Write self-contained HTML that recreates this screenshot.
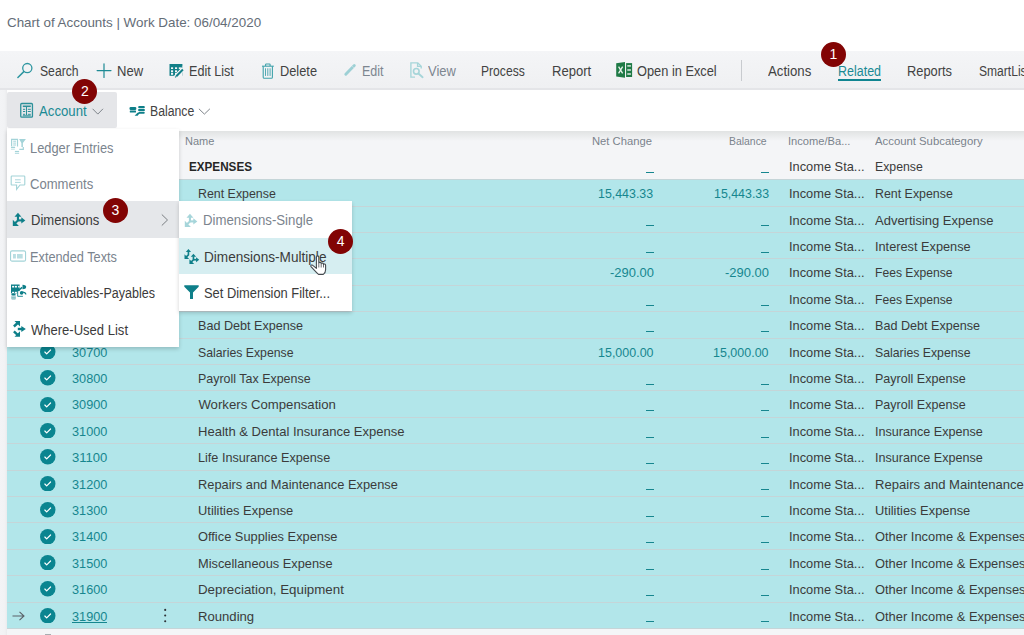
<!DOCTYPE html>
<html><head><meta charset="utf-8"><style>
html,body{margin:0;padding:0;width:1024px;height:635px;overflow:hidden;background:#fff;}
body{position:relative;font-family:"Liberation Sans",sans-serif;}
.t{position:absolute;white-space:nowrap;line-height:1;transform-origin:0 0;}
.r{position:absolute;}
.badge{position:absolute;width:25px;height:25px;border-radius:50%;background:#820404;color:#fff;font-size:14px;line-height:25px;text-align:center;font-weight:normal;}
</style></head><body>
<div class="r" style="left:0px;top:0px;width:1024px;height:51px;background:#ffffff;"></div>
<div class="r" style="left:0px;top:51px;width:1024px;height:584px;background:#f4f5f7;"></div>
<div class="r" style="left:0px;top:51px;width:1024px;height:37px;background:linear-gradient(#f4f5f7,#eff0f2);"></div>
<div class="r" style="left:0px;top:88px;width:1024px;height:2px;background:#e4e5e8;"></div>
<div class="r" style="left:0px;top:90px;width:7px;height:545px;background:linear-gradient(90deg,#f3f4f6,#f1f2f4 70%,#eaebed);"></div>
<div class="r" style="left:7px;top:90px;width:1017px;height:41px;background:#ffffff;"></div>
<div class="t" style="left:7.00px;top:16.26px;font-size:13.4px;color:#646d77;">Chart of Accounts | Work Date: 06/04/2020</div>
<div class="t" style="left:40.30px;top:63.95px;font-size:14px;color:#424242;transform:scaleX(0.8698);">Search</div>
<div class="t" style="left:116.90px;top:63.95px;font-size:14px;color:#424242;transform:scaleX(0.9298);">New</div>
<div class="t" style="left:188.90px;top:63.95px;font-size:14px;color:#424242;transform:scaleX(0.9001);">Edit List</div>
<div class="t" style="left:280.00px;top:63.95px;font-size:14px;color:#424242;transform:scaleX(0.9145);">Delete</div>
<div class="t" style="left:362.30px;top:63.95px;font-size:14px;color:#7d8690;transform:scaleX(0.8944);">Edit</div>
<div class="t" style="left:427.60px;top:63.95px;font-size:14px;color:#7d8690;transform:scaleX(0.9269);">View</div>
<div class="t" style="left:481.25px;top:63.95px;font-size:14px;color:#424242;transform:scaleX(0.8657);">Process</div>
<div class="t" style="left:551.60px;top:63.95px;font-size:14px;color:#424242;transform:scaleX(0.9333);">Report</div>
<div class="t" style="left:636.60px;top:63.95px;font-size:14px;color:#424242;transform:scaleX(0.9145);">Open in Excel</div>
<div class="r" style="left:741px;top:59.5px;width:1px;height:21.5px;background:#c8cbcf;"></div>
<div class="t" style="left:767.50px;top:63.95px;font-size:14px;color:#424242;transform:scaleX(0.9429);">Actions</div>
<div class="t" style="left:837.70px;top:63.95px;font-size:14px;color:#1a8a94;transform:scaleX(0.8916);">Related</div>
<div class="r" style="left:837.5px;top:79px;width:43.5px;height:2px;background:#0f8591;"></div>
<div class="t" style="left:907.40px;top:63.95px;font-size:14px;color:#424242;transform:scaleX(0.9184);">Reports</div>
<div class="t" style="left:978.80px;top:63.95px;font-size:14px;color:#424242;transform:scaleX(0.8617);">SmartLists</div>
<div class="r" style="left:7px;top:92px;width:110px;height:36px;background:#e5e6e9;border-radius:2px"></div>
<div class="t" style="left:39.30px;top:103.95px;font-size:14px;color:#1a8a94;transform:scaleX(0.9425);">Account</div>
<div class="t" style="left:149.70px;top:103.95px;font-size:14px;color:#424242;transform:scaleX(0.8753);">Balance</div>
<svg class="r" style="left:0;top:0" width="1024" height="140" viewBox="0 0 1024 140">
<g fill="none" stroke-linecap="round">
<circle cx="27.3" cy="68.1" r="4.6" stroke="#2e96a0" stroke-width="1.3"/>
<path d="M23.8 71.6L17.9 77.5" stroke="#2e96a0" stroke-width="1.5"/>
<path d="M104 63.8V77.5M97.1 70.6H111" stroke="#1d8a94" stroke-width="1.2"/>
</g>
<g>
<rect x="169.5" y="64" width="12.9" height="11.8" fill="#127f88"/>
<g fill="#f4f5f7">
<rect x="171" y="67.3" width="2.1" height="1.7"/><rect x="175" y="67.3" width="2.1" height="1.7"/><rect x="178.8" y="67.3" width="2.1" height="1.7"/>
<rect x="171" y="70.3" width="2.1" height="1.9"/><rect x="175" y="70.3" width="2.1" height="1.9"/>
<rect x="171" y="72.9" width="2.1" height="1.9"/><rect x="175" y="72.9" width="2.1" height="1.9"/>
<path d="M182.4 66.1V76H174L176 73.5L181 68.3Z"/>
</g>
<path d="M176 76.6L183.4 69" stroke="#f4f5f7" stroke-width="3.6"/>
<path d="M176.3 76.3L182.9 69.5" stroke="#127f88" stroke-width="2"/>
<path d="M175.2 77.4L176.3 76.3" stroke="#127f88" stroke-width="1.2"/>
</g>
<g fill="none" stroke="#3fa2ab" stroke-width="1.1">
<path d="M262 66.2H273.8"/>
<path d="M265.6 66V64.6Q265.6 64 266.3 64H269.5Q270.1 64 270.1 64.6V66"/>
<path d="M263.2 66.3V77.2Q263.2 78.3 264.3 78.3H271.4Q272.4 78.3 272.4 77.2V66.3"/>
<path d="M265.5 68.3V75.9M267.8 68.3V75.9M270.1 68.3V75.9" stroke-width="0.9"/>
</g>
<path d="M345.8 74.2L354.3 65.6" stroke="#9dd0d5" stroke-width="2.9" stroke-linecap="round"/>
<path d="M352.6 66.6L353.4 67.4" stroke="#f4f5f7" stroke-width="0.9"/>
<g fill="none" stroke="#a6d5d9" stroke-width="1.35">
<path d="M415 77.1H410.9V62.8H417.8L421.2 66.2V68.5"/>
<path d="M417.6 62.9V66.4H421"/>
<circle cx="416.3" cy="71.3" r="2.8" stroke-width="1.6"/>
<path d="M418.4 73.5L422.6 77.2" stroke-width="1.9" stroke-linecap="round"/>
</g>
<g>
<path d="M616.2 63.3L625 62V77.8L616.2 76.6Z" fill="#1f7a46"/>
<path d="M618.6 66.6L622.6 73.4M622.6 66.6L618.6 73.4" stroke="#e9f2ec" stroke-width="1.3"/>
<rect x="626.1" y="63.1" width="6" height="13.9" fill="#1f7a46"/>
<rect x="627.3" y="65.2" width="3.6" height="1.4" fill="#e9f2ec"/>
<rect x="627.3" y="69.3" width="3.6" height="1.4" fill="#e9f2ec"/>
<rect x="627.3" y="73.3" width="3.6" height="1.4" fill="#e9f2ec"/>
</g>
<g fill="none" stroke="#2c9099">
<rect x="20.75" y="103.5" width="11.7" height="13.7" rx="1" stroke-width="1.3"/>
<path d="M22.8 106.3H30.8" stroke-width="1.6"/>
<path d="M26.5 107V115M23 109.3H25.2M27.8 109.3H30.8M23 111.5H25.2M27.8 111.5H30.8M23 114.3H25.2M27.8 114.3H30.8M22.8 115.8H30.8" stroke-width="1"/>
</g>
<g fill="#0e7f89">
<rect x="129.5" y="106.9" width="6.8" height="3" rx="1.2"/><rect x="129.8" y="110.6" width="6.2" height="2" rx="0.5"/>
<rect x="138.2" y="105.9" width="6.6" height="2.4" rx="1"/><rect x="138.2" y="109" width="6.6" height="2" rx="0.6"/><rect x="138.6" y="111.7" width="5.9" height="2" rx="0.5"/>
<path d="M134.6 115.8L137.5 112.8H140L137.6 115.8Z"/>
</g>
<g fill="none" stroke="#7f858b" stroke-width="1">
<path d="M92.6 108.8L97.8 114.1L103 108.8"/>
<path d="M198.9 108.8L204.4 114.1L209.9 108.8"/>
</g>
</svg>
<div class="r" style="left:7px;top:131px;width:1017px;height:48.25px;background:#f4f5f7;"></div>
<div class="r" style="left:7px;top:131px;width:1017px;height:10px;background:linear-gradient(#e1e3e3,rgba(243,244,246,0))"></div>
<div class="t" style="left:185.00px;top:135.63px;font-size:10.6px;color:#7a838c;transform:scaleX(1.0388);">Name</div>
<div class="t" style="left:591.70px;top:135.63px;font-size:10.6px;color:#7a838c;transform:scaleX(1.0610);">Net Change</div>
<div class="t" style="left:728.80px;top:135.63px;font-size:10.6px;color:#7a838c;transform:scaleX(0.9838);">Balance</div>
<div class="t" style="left:788.30px;top:135.63px;font-size:10.6px;color:#7a838c;transform:scaleX(1.0501);">Income/Ba...</div>
<div class="t" style="left:874.80px;top:135.63px;font-size:10.6px;color:#7a838c;transform:scaleX(1.0690);">Account Subcategory</div>
<div class="t" style="left:189.00px;top:160.43px;font-size:13.2px;color:#262626;transform:scaleX(0.8855);font-weight:bold;">EXPENSES</div>
<div class="r" style="left:645.6px;top:172px;width:8px;height:1px;background:#16868f;"></div>
<div class="r" style="left:760.8px;top:172px;width:8px;height:1px;background:#16868f;"></div>
<div class="t" style="left:789.00px;top:160.43px;font-size:13.2px;color:#3b3b3b;transform:scaleX(0.9724);">Income Sta...</div>
<div class="t" style="left:875.30px;top:160.43px;font-size:13.2px;color:#3b3b3b;transform:scaleX(0.9309);">Expense</div>
<div class="r" style="left:7px;top:179.25px;width:1017px;height:26.6px;background:#b2e6ea;"></div>
<div class="t" style="left:198.40px;top:187.18px;font-size:13.2px;color:#3b3b3b;transform:scaleX(0.9397);">Rent Expense</div>
<div class="t" style="left:598.40px;top:187.18px;font-size:13.2px;color:#16868f;transform:scaleX(0.9397);">15,443.33</div>
<div class="t" style="left:713.60px;top:187.18px;font-size:13.2px;color:#16868f;transform:scaleX(0.9397);">15,443.33</div>
<div class="t" style="left:789.00px;top:187.18px;font-size:13.2px;color:#3b3b3b;transform:scaleX(0.9724);">Income Sta...</div>
<div class="t" style="left:875.30px;top:187.18px;font-size:13.2px;color:#3b3b3b;transform:scaleX(0.9397);">Rent Expense</div>
<div class="r" style="left:7px;top:205.65px;width:1017px;height:26.6px;background:#b2e6ea;"></div>
<div class="t" style="left:198.40px;top:213.58px;font-size:13.2px;color:#3b3b3b;transform:scaleX(0.9849);">Advertising Expense</div>
<div class="r" style="left:645.6px;top:225px;width:8px;height:1px;background:#16868f;"></div>
<div class="r" style="left:760.8px;top:225px;width:8px;height:1px;background:#16868f;"></div>
<div class="t" style="left:789.00px;top:213.58px;font-size:13.2px;color:#3b3b3b;transform:scaleX(0.9724);">Income Sta...</div>
<div class="t" style="left:875.30px;top:213.58px;font-size:13.2px;color:#3b3b3b;transform:scaleX(0.9849);">Advertising Expense</div>
<div class="r" style="left:7px;top:232.05px;width:1017px;height:26.6px;background:#b2e6ea;"></div>
<div class="t" style="left:198.40px;top:239.98px;font-size:13.2px;color:#3b3b3b;transform:scaleX(0.9660);">Interest Expense</div>
<div class="r" style="left:645.6px;top:252px;width:8px;height:1px;background:#16868f;"></div>
<div class="r" style="left:760.8px;top:252px;width:8px;height:1px;background:#16868f;"></div>
<div class="t" style="left:789.00px;top:239.98px;font-size:13.2px;color:#3b3b3b;transform:scaleX(0.9724);">Income Sta...</div>
<div class="t" style="left:875.30px;top:239.98px;font-size:13.2px;color:#3b3b3b;transform:scaleX(0.9660);">Interest Expense</div>
<div class="r" style="left:7px;top:258.45px;width:1017px;height:26.6px;background:#b2e6ea;"></div>
<div class="t" style="left:198.40px;top:266.38px;font-size:13.2px;color:#3b3b3b;transform:scaleX(0.9900);">Bank Fees Expense</div>
<div class="t" style="left:609.70px;top:266.38px;font-size:13.2px;color:#16868f;transform:scaleX(0.9810);">-290.00</div>
<div class="t" style="left:724.90px;top:266.38px;font-size:13.2px;color:#16868f;transform:scaleX(0.9810);">-290.00</div>
<div class="t" style="left:789.00px;top:266.38px;font-size:13.2px;color:#3b3b3b;transform:scaleX(0.9724);">Income Sta...</div>
<div class="t" style="left:875.30px;top:266.38px;font-size:13.2px;color:#3b3b3b;transform:scaleX(0.9193);">Fees Expense</div>
<div class="r" style="left:7px;top:284.85px;width:1017px;height:26.6px;background:#b2e6ea;"></div>
<div class="t" style="left:198.40px;top:292.78px;font-size:13.2px;color:#3b3b3b;transform:scaleX(0.9900);">Collection Fees Expense</div>
<div class="r" style="left:645.6px;top:305px;width:8px;height:1px;background:#16868f;"></div>
<div class="r" style="left:760.8px;top:305px;width:8px;height:1px;background:#16868f;"></div>
<div class="t" style="left:789.00px;top:292.78px;font-size:13.2px;color:#3b3b3b;transform:scaleX(0.9724);">Income Sta...</div>
<div class="t" style="left:875.30px;top:292.78px;font-size:13.2px;color:#3b3b3b;transform:scaleX(0.9193);">Fees Expense</div>
<div class="r" style="left:7px;top:311.25px;width:1017px;height:26.6px;background:#b2e6ea;"></div>
<div class="t" style="left:198.40px;top:319.18px;font-size:13.2px;color:#3b3b3b;transform:scaleX(0.9547);">Bad Debt Expense</div>
<div class="r" style="left:645.6px;top:331px;width:8px;height:1px;background:#16868f;"></div>
<div class="r" style="left:760.8px;top:331px;width:8px;height:1px;background:#16868f;"></div>
<div class="t" style="left:789.00px;top:319.18px;font-size:13.2px;color:#3b3b3b;transform:scaleX(0.9724);">Income Sta...</div>
<div class="t" style="left:875.30px;top:319.18px;font-size:13.2px;color:#3b3b3b;transform:scaleX(0.9547);">Bad Debt Expense</div>
<div class="r" style="left:7px;top:337.65px;width:1017px;height:26.6px;background:#b2e6ea;"></div>
<div class="t" style="left:198.40px;top:345.58px;font-size:13.2px;color:#3b3b3b;transform:scaleX(0.9313);">Salaries Expense</div>
<div class="t" style="left:71.80px;top:345.58px;font-size:13.2px;color:#16868f;transform:scaleX(0.9647);">30700</div>
<svg class="r" style="left:40px;top:343.70px" width="15.5" height="15.5" viewBox="0 0 16 16"><circle cx="8" cy="8" r="8" fill="#0a8590"/><path d="M5 8.3l1.9 1.9 4-4" stroke="#fff" stroke-width="1.25" fill="none" stroke-linecap="round" stroke-linejoin="round"/></svg>
<div class="t" style="left:598.00px;top:345.58px;font-size:13.2px;color:#16868f;transform:scaleX(0.9465);">15,000.00</div>
<div class="t" style="left:713.20px;top:345.58px;font-size:13.2px;color:#16868f;transform:scaleX(0.9465);">15,000.00</div>
<div class="t" style="left:789.00px;top:345.58px;font-size:13.2px;color:#3b3b3b;transform:scaleX(0.9724);">Income Sta...</div>
<div class="t" style="left:875.30px;top:345.58px;font-size:13.2px;color:#3b3b3b;transform:scaleX(0.9313);">Salaries Expense</div>
<div class="r" style="left:7px;top:364.05px;width:1017px;height:26.6px;background:#b2e6ea;"></div>
<div class="t" style="left:198.40px;top:371.98px;font-size:13.2px;color:#3b3b3b;transform:scaleX(0.9445);">Payroll Tax Expense</div>
<div class="t" style="left:71.80px;top:371.98px;font-size:13.2px;color:#16868f;transform:scaleX(0.9647);">30800</div>
<svg class="r" style="left:40px;top:370.10px" width="15.5" height="15.5" viewBox="0 0 16 16"><circle cx="8" cy="8" r="8" fill="#0a8590"/><path d="M5 8.3l1.9 1.9 4-4" stroke="#fff" stroke-width="1.25" fill="none" stroke-linecap="round" stroke-linejoin="round"/></svg>
<div class="r" style="left:645.6px;top:384px;width:8px;height:1px;background:#16868f;"></div>
<div class="r" style="left:760.8px;top:384px;width:8px;height:1px;background:#16868f;"></div>
<div class="t" style="left:789.00px;top:371.98px;font-size:13.2px;color:#3b3b3b;transform:scaleX(0.9724);">Income Sta...</div>
<div class="t" style="left:875.30px;top:371.98px;font-size:13.2px;color:#3b3b3b;transform:scaleX(0.9510);">Payroll Expense</div>
<div class="r" style="left:7px;top:390.45px;width:1017px;height:26.6px;background:#b2e6ea;"></div>
<div class="t" style="left:198.40px;top:398.38px;font-size:13.2px;color:#3b3b3b;">Workers Compensation</div>
<div class="t" style="left:71.80px;top:398.38px;font-size:13.2px;color:#16868f;transform:scaleX(0.9647);">30900</div>
<svg class="r" style="left:40px;top:396.50px" width="15.5" height="15.5" viewBox="0 0 16 16"><circle cx="8" cy="8" r="8" fill="#0a8590"/><path d="M5 8.3l1.9 1.9 4-4" stroke="#fff" stroke-width="1.25" fill="none" stroke-linecap="round" stroke-linejoin="round"/></svg>
<div class="r" style="left:645.6px;top:410px;width:8px;height:1px;background:#16868f;"></div>
<div class="r" style="left:760.8px;top:410px;width:8px;height:1px;background:#16868f;"></div>
<div class="t" style="left:789.00px;top:398.38px;font-size:13.2px;color:#3b3b3b;transform:scaleX(0.9724);">Income Sta...</div>
<div class="t" style="left:875.30px;top:398.38px;font-size:13.2px;color:#3b3b3b;transform:scaleX(0.9510);">Payroll Expense</div>
<div class="r" style="left:7px;top:416.85px;width:1017px;height:26.6px;background:#b2e6ea;"></div>
<div class="t" style="left:198.40px;top:424.78px;font-size:13.2px;color:#3b3b3b;transform:scaleX(0.9883);">Health &amp; Dental Insurance Expense</div>
<div class="t" style="left:71.80px;top:424.78px;font-size:13.2px;color:#16868f;transform:scaleX(0.9647);">31000</div>
<svg class="r" style="left:40px;top:422.90px" width="15.5" height="15.5" viewBox="0 0 16 16"><circle cx="8" cy="8" r="8" fill="#0a8590"/><path d="M5 8.3l1.9 1.9 4-4" stroke="#fff" stroke-width="1.25" fill="none" stroke-linecap="round" stroke-linejoin="round"/></svg>
<div class="r" style="left:645.6px;top:437px;width:8px;height:1px;background:#16868f;"></div>
<div class="r" style="left:760.8px;top:437px;width:8px;height:1px;background:#16868f;"></div>
<div class="t" style="left:789.00px;top:424.78px;font-size:13.2px;color:#3b3b3b;transform:scaleX(0.9724);">Income Sta...</div>
<div class="t" style="left:875.30px;top:424.78px;font-size:13.2px;color:#3b3b3b;transform:scaleX(0.9549);">Insurance Expense</div>
<div class="r" style="left:7px;top:443.25px;width:1017px;height:26.6px;background:#b2e6ea;"></div>
<div class="t" style="left:198.40px;top:451.18px;font-size:13.2px;color:#3b3b3b;transform:scaleX(0.9591);">Life Insurance Expense</div>
<div class="t" style="left:71.80px;top:451.18px;font-size:13.2px;color:#16868f;transform:scaleX(0.9914);">31100</div>
<svg class="r" style="left:40px;top:449.30px" width="15.5" height="15.5" viewBox="0 0 16 16"><circle cx="8" cy="8" r="8" fill="#0a8590"/><path d="M5 8.3l1.9 1.9 4-4" stroke="#fff" stroke-width="1.25" fill="none" stroke-linecap="round" stroke-linejoin="round"/></svg>
<div class="r" style="left:645.6px;top:463px;width:8px;height:1px;background:#16868f;"></div>
<div class="r" style="left:760.8px;top:463px;width:8px;height:1px;background:#16868f;"></div>
<div class="t" style="left:789.00px;top:451.18px;font-size:13.2px;color:#3b3b3b;transform:scaleX(0.9724);">Income Sta...</div>
<div class="t" style="left:875.30px;top:451.18px;font-size:13.2px;color:#3b3b3b;transform:scaleX(0.9549);">Insurance Expense</div>
<div class="r" style="left:7px;top:469.65px;width:1017px;height:26.6px;background:#b2e6ea;"></div>
<div class="t" style="left:198.40px;top:477.58px;font-size:13.2px;color:#3b3b3b;transform:scaleX(0.9739);">Repairs and Maintenance Expense</div>
<div class="t" style="left:71.80px;top:477.58px;font-size:13.2px;color:#16868f;transform:scaleX(0.9647);">31200</div>
<svg class="r" style="left:40px;top:475.70px" width="15.5" height="15.5" viewBox="0 0 16 16"><circle cx="8" cy="8" r="8" fill="#0a8590"/><path d="M5 8.3l1.9 1.9 4-4" stroke="#fff" stroke-width="1.25" fill="none" stroke-linecap="round" stroke-linejoin="round"/></svg>
<div class="r" style="left:645.6px;top:489px;width:8px;height:1px;background:#16868f;"></div>
<div class="r" style="left:760.8px;top:489px;width:8px;height:1px;background:#16868f;"></div>
<div class="t" style="left:789.00px;top:477.58px;font-size:13.2px;color:#3b3b3b;transform:scaleX(0.9724);">Income Sta...</div>
<div class="t" style="left:875.30px;top:477.58px;font-size:13.2px;color:#3b3b3b;transform:scaleX(0.9906);">Repairs and Maintenance</div>
<div class="r" style="left:7px;top:496.05px;width:1017px;height:26.6px;background:#b2e6ea;"></div>
<div class="t" style="left:198.40px;top:503.98px;font-size:13.2px;color:#3b3b3b;transform:scaleX(0.9770);">Utilities Expense</div>
<div class="t" style="left:71.80px;top:503.98px;font-size:13.2px;color:#16868f;transform:scaleX(0.9647);">31300</div>
<svg class="r" style="left:40px;top:502.10px" width="15.5" height="15.5" viewBox="0 0 16 16"><circle cx="8" cy="8" r="8" fill="#0a8590"/><path d="M5 8.3l1.9 1.9 4-4" stroke="#fff" stroke-width="1.25" fill="none" stroke-linecap="round" stroke-linejoin="round"/></svg>
<div class="r" style="left:645.6px;top:516px;width:8px;height:1px;background:#16868f;"></div>
<div class="r" style="left:760.8px;top:516px;width:8px;height:1px;background:#16868f;"></div>
<div class="t" style="left:789.00px;top:503.98px;font-size:13.2px;color:#3b3b3b;transform:scaleX(0.9724);">Income Sta...</div>
<div class="t" style="left:875.30px;top:503.98px;font-size:13.2px;color:#3b3b3b;transform:scaleX(0.9770);">Utilities Expense</div>
<div class="r" style="left:7px;top:522.45px;width:1017px;height:26.6px;background:#b2e6ea;"></div>
<div class="t" style="left:198.40px;top:530.38px;font-size:13.2px;color:#3b3b3b;transform:scaleX(0.9725);">Office Supplies Expense</div>
<div class="t" style="left:71.80px;top:530.38px;font-size:13.2px;color:#16868f;transform:scaleX(0.9647);">31400</div>
<svg class="r" style="left:40px;top:528.50px" width="15.5" height="15.5" viewBox="0 0 16 16"><circle cx="8" cy="8" r="8" fill="#0a8590"/><path d="M5 8.3l1.9 1.9 4-4" stroke="#fff" stroke-width="1.25" fill="none" stroke-linecap="round" stroke-linejoin="round"/></svg>
<div class="r" style="left:645.6px;top:542px;width:8px;height:1px;background:#16868f;"></div>
<div class="r" style="left:760.8px;top:542px;width:8px;height:1px;background:#16868f;"></div>
<div class="t" style="left:789.00px;top:530.38px;font-size:13.2px;color:#3b3b3b;transform:scaleX(0.9724);">Income Sta...</div>
<div class="t" style="left:875.30px;top:530.38px;font-size:13.2px;color:#3b3b3b;transform:scaleX(0.9779);">Other Income &amp; Expenses</div>
<div class="r" style="left:7px;top:548.85px;width:1017px;height:26.6px;background:#b2e6ea;"></div>
<div class="t" style="left:198.40px;top:556.78px;font-size:13.2px;color:#3b3b3b;transform:scaleX(0.9714);">Miscellaneous Expense</div>
<div class="t" style="left:71.80px;top:556.78px;font-size:13.2px;color:#16868f;transform:scaleX(0.9647);">31500</div>
<svg class="r" style="left:40px;top:554.90px" width="15.5" height="15.5" viewBox="0 0 16 16"><circle cx="8" cy="8" r="8" fill="#0a8590"/><path d="M5 8.3l1.9 1.9 4-4" stroke="#fff" stroke-width="1.25" fill="none" stroke-linecap="round" stroke-linejoin="round"/></svg>
<div class="r" style="left:645.6px;top:569px;width:8px;height:1px;background:#16868f;"></div>
<div class="r" style="left:760.8px;top:569px;width:8px;height:1px;background:#16868f;"></div>
<div class="t" style="left:789.00px;top:556.78px;font-size:13.2px;color:#3b3b3b;transform:scaleX(0.9724);">Income Sta...</div>
<div class="t" style="left:875.30px;top:556.78px;font-size:13.2px;color:#3b3b3b;transform:scaleX(0.9779);">Other Income &amp; Expenses</div>
<div class="r" style="left:7px;top:575.25px;width:1017px;height:26.6px;background:#b2e6ea;"></div>
<div class="t" style="left:198.40px;top:583.18px;font-size:13.2px;color:#3b3b3b;transform:scaleX(1.0101);">Depreciation, Equipment</div>
<div class="t" style="left:71.80px;top:583.18px;font-size:13.2px;color:#16868f;transform:scaleX(0.9647);">31600</div>
<svg class="r" style="left:40px;top:581.30px" width="15.5" height="15.5" viewBox="0 0 16 16"><circle cx="8" cy="8" r="8" fill="#0a8590"/><path d="M5 8.3l1.9 1.9 4-4" stroke="#fff" stroke-width="1.25" fill="none" stroke-linecap="round" stroke-linejoin="round"/></svg>
<div class="r" style="left:645.6px;top:595px;width:8px;height:1px;background:#16868f;"></div>
<div class="r" style="left:760.8px;top:595px;width:8px;height:1px;background:#16868f;"></div>
<div class="t" style="left:789.00px;top:583.18px;font-size:13.2px;color:#3b3b3b;transform:scaleX(0.9724);">Income Sta...</div>
<div class="t" style="left:875.30px;top:583.18px;font-size:13.2px;color:#3b3b3b;transform:scaleX(0.9779);">Other Income &amp; Expenses</div>
<div class="r" style="left:7px;top:601.65px;width:1017px;height:26.6px;background:#b2e6ea;"></div>
<div class="t" style="left:198.40px;top:609.58px;font-size:13.2px;color:#3b3b3b;transform:scaleX(0.9948);">Rounding</div>
<div class="t" style="left:71.80px;top:609.58px;font-size:13.2px;color:#16868f;transform:scaleX(0.9647);">31900</div>
<svg class="r" style="left:40px;top:607.70px" width="15.5" height="15.5" viewBox="0 0 16 16"><circle cx="8" cy="8" r="8" fill="#0a8590"/><path d="M5 8.3l1.9 1.9 4-4" stroke="#fff" stroke-width="1.25" fill="none" stroke-linecap="round" stroke-linejoin="round"/></svg>
<div class="r" style="left:645.6px;top:621px;width:8px;height:1px;background:#16868f;"></div>
<div class="r" style="left:760.8px;top:621px;width:8px;height:1px;background:#16868f;"></div>
<div class="t" style="left:789.00px;top:609.58px;font-size:13.2px;color:#3b3b3b;transform:scaleX(0.9724);">Income Sta...</div>
<div class="t" style="left:875.30px;top:609.58px;font-size:13.2px;color:#3b3b3b;transform:scaleX(0.9779);">Other Income &amp; Expenses</div>
<div class="r" style="left:7px;top:179px;width:1017px;height:1px;background:#c5d5d8;"></div>
<div class="r" style="left:7px;top:206px;width:1017px;height:1px;background:#c5d5d8;"></div>
<div class="r" style="left:7px;top:232px;width:1017px;height:1px;background:#c5d5d8;"></div>
<div class="r" style="left:7px;top:258px;width:1017px;height:1px;background:#c5d5d8;"></div>
<div class="r" style="left:7px;top:285px;width:1017px;height:1px;background:#c5d5d8;"></div>
<div class="r" style="left:7px;top:311px;width:1017px;height:1px;background:#c5d5d8;"></div>
<div class="r" style="left:7px;top:338px;width:1017px;height:1px;background:#c5d5d8;"></div>
<div class="r" style="left:7px;top:364px;width:1017px;height:1px;background:#c5d5d8;"></div>
<div class="r" style="left:7px;top:390px;width:1017px;height:1px;background:#c5d5d8;"></div>
<div class="r" style="left:7px;top:417px;width:1017px;height:1px;background:#c5d5d8;"></div>
<div class="r" style="left:7px;top:443px;width:1017px;height:1px;background:#c5d5d8;"></div>
<div class="r" style="left:7px;top:470px;width:1017px;height:1px;background:#c5d5d8;"></div>
<div class="r" style="left:7px;top:496px;width:1017px;height:1px;background:#c5d5d8;"></div>
<div class="r" style="left:7px;top:522px;width:1017px;height:1px;background:#c5d5d8;"></div>
<div class="r" style="left:7px;top:549px;width:1017px;height:1px;background:#c5d5d8;"></div>
<div class="r" style="left:7px;top:575px;width:1017px;height:1px;background:#c5d5d8;"></div>
<div class="r" style="left:7px;top:602px;width:1017px;height:1px;background:#c5d5d8;"></div>
<div class="r" style="left:7px;top:628px;width:1017px;height:1px;background:#c5d5d8;"></div>
<svg class="r" style="left:12px;top:610.75px" width="13" height="10" viewBox="0 0 13 10"><path d="M0.5 5H12M7.5 0.8L12 5 7.5 9.2" stroke="#5a6168" stroke-width="1.1" fill="none"/></svg>
<div class="r" style="left:71.5px;top:622px;width:35.5px;height:1px;background:#16868f;"></div>
<svg class="r" style="left:160px;top:604px" width="10" height="22" viewBox="160 604 10 22"><g fill="#2f3337"><circle cx="165.2" cy="609.9" r="1.05"/><circle cx="165.2" cy="615.5" r="1.05"/><circle cx="165.2" cy="621.3" r="1.05"/></g></svg>
<div class="r" style="left:44.5px;top:633.6px;width:6.5px;height:1.4px;background:#a9adb1;"></div>
<div class="r" style="left:7px;top:128.5px;width:171.5px;height:218.10px;background:#fff;box-shadow:0 1.5px 4px rgba(0,0,0,0.18)"></div>
<div class="r" style="left:7px;top:201.2px;width:171.5px;height:36.35px;background:#e5e7ea;"></div>
<div class="t" style="left:29.90px;top:141.92px;font-size:13.8px;color:#7b848e;transform:scaleX(0.9302);">Ledger Entries</div>
<div class="t" style="left:29.90px;top:178.02px;font-size:13.8px;color:#7b848e;transform:scaleX(0.9472);">Comments</div>
<div class="t" style="left:30.80px;top:214.02px;font-size:13.8px;color:#3b3b3b;transform:scaleX(0.9458);">Dimensions</div>
<div class="t" style="left:30.00px;top:250.62px;font-size:13.8px;color:#7b848e;transform:scaleX(0.9244);">Extended Texts</div>
<div class="t" style="left:30.90px;top:287.12px;font-size:13.8px;color:#3b3b3b;transform:scaleX(0.9081);">Receivables-Payables</div>
<div class="t" style="left:30.90px;top:323.72px;font-size:13.8px;color:#3b3b3b;transform:scaleX(0.9441);">Where-Used List</div>
<svg class="r" style="left:160px;top:213px" width="10" height="14" viewBox="0 0 10 14"><path d="M1.8 1.5L7.5 7 1.8 12.5" stroke="#74787c" stroke-width="0.95" fill="none"/></svg>
<div class="r" style="left:179.25px;top:201.25px;width:173px;height:109.50px;background:#fff;box-shadow:0 1.5px 4px rgba(0,0,0,0.18)"></div>
<div class="r" style="left:179.25px;top:237.75px;width:173px;height:36.5px;background:#d6eef1;"></div>
<div class="t" style="left:202.50px;top:214.12px;font-size:13.8px;color:#7b848e;transform:scaleX(0.9563);">Dimensions-Single</div>
<div class="t" style="left:203.75px;top:250.92px;font-size:13.8px;color:#3b3b3b;transform:scaleX(0.9858);">Dimensions-Multiple</div>
<div class="t" style="left:203.75px;top:287.12px;font-size:13.8px;color:#3b3b3b;transform:scaleX(0.9336);">Set Dimension Filter...</div>
<svg class="r" style="left:0;top:0" width="400" height="350" viewBox="0 0 400 350">
<g transform="translate(7 135)">
<g fill="none" stroke="#a3d3d8" stroke-width="1.2">
<path d="M4.6 11.2V4.4H10.5V11.5"/>
<path d="M6.2 6.2H9M6.2 8.1H9M6.2 10H9" stroke-width="1"/>
<path d="M16.3 12V14.3H12.3"/>
</g>
<path d="M12.1 3.9H18.9L15.9 8.1V12.1L14.4 12.1V8.1Z" fill="#a3d3d8"/>
<g fill="#a3d3d8">
<rect x="4" y="11.7" width="4.1" height="1.4"/>
<rect x="4" y="13.8" width="3.8" height="1" opacity="0.6"/>
<rect x="7.9" y="15.9" width="4.2" height="1.2"/>
<rect x="7.9" y="17.8" width="4.2" height="1.1" opacity="0.8"/>
</g>
</g>
<g transform="translate(7 171)" fill="none" stroke="#a3d3d8" stroke-width="1.1">
<path d="M6.2 14H4.6Q4.2 14 4.2 13.4V5.8Q4.2 5 5 5H17Q17.8 5 17.8 5.8V13.2Q17.8 14 17 14H13L9.6 18.3V14Z"/>
<path d="M8 8.8H13.7M8 11.4H13.7" stroke-width="0.9"/>
</g>
<path d="M17.95 216.00L17.95 220.40L14.60 223.80" stroke="#0e7f89" stroke-width="2.10" fill="none"/><path d="M14.50 216.70L17.95 212.70L21.40 216.70Z" fill="#0e7f89"/><path d="M12.80 219.80L12.80 225.90L18.90 225.90Z" fill="#0e7f89"/><path d="M17.95 220.40L22.00 220.40" stroke="#0e7f89" stroke-width="2.10" fill="none"/><path d="M21.30 217.30L25.30 220.40L21.30 223.50Z" fill="#0e7f89"/>
<g transform="translate(7 244)">
<rect x="3.55" y="6.85" width="15" height="10.3" rx="1.5" fill="none" stroke="#a3d3d8" stroke-width="1.1"/>
<rect x="6" y="10" width="2.9" height="4.5" fill="#a3d3d8" opacity="0.75"/>
<rect x="10" y="10" width="5.7" height="4.5" fill="#a3d3d8" opacity="0.75"/>
</g>
<g transform="translate(9 282)" fill="#0e7f89">
<rect x="2" y="2.5" width="8.6" height="6.6"/>
<rect x="2" y="9" width="6.4" height="2.3"/>
<g fill="#fff"><rect x="3.1" y="3.9" width="2.1" height="1.6"/><rect x="6" y="3.9" width="1.9" height="1.6"/><rect x="9.1" y="3.9" width="1.5" height="1.6"/><rect x="3.1" y="9.8" width="2.1" height="1.2"/><rect x="6" y="9.8" width="1.9" height="1.2"/></g>
<path d="M8.7 9V14.3H13.9" stroke="#0e7f89" stroke-width="0.9" fill="none"/>
<path d="M13.5 2.8Q17.3 3 17.2 5Q17 7.2 13.5 7.2Z"/>
<path d="M9.4 8.4L13.2 5.4" stroke="#0e7f89" stroke-width="1.4"/>
<circle cx="12.6" cy="10.9" r="1.8"/>
<path d="M13.4 10.2Q16.2 9.8 17 12.4" stroke="#0e7f89" stroke-width="1.4" fill="none"/>
<ellipse cx="4.5" cy="12.2" rx="2.3" ry="0.95"/>
<rect x="2.3" y="13.2" width="4.5" height="4.4" rx="0.8" opacity="0.6"/>
<rect x="2.3" y="14.3" width="4.5" height="0.5" fill="#fff"/><rect x="2.3" y="15.8" width="4.5" height="0.5" fill="#fff"/>
</g>
<g transform="translate(7 317)" fill="#0e7f89">
<path d="M6.9 9.5L11.2 5.5" stroke="#0e7f89" stroke-width="2.4"/>
<path d="M7.5 4H13V9.6Z"/>
<path d="M6.9 14.3L11.2 18.3" stroke="#0e7f89" stroke-width="2.4"/>
<path d="M13 14.2V19.8H7.5Z"/>
<path d="M10.8 12H15.2" stroke="#0e7f89" stroke-width="2.4"/>
<path d="M14.3 9.1L18.8 12L14.3 14.9Z"/>
</g>
<path d="M189.95 217.00L189.95 221.40L186.60 224.80" stroke="#a6d5da" stroke-width="2.10" fill="none"/><path d="M186.50 217.70L189.95 213.70L193.40 217.70Z" fill="#a6d5da"/><path d="M184.80 220.80L184.80 226.90L190.90 226.90Z" fill="#a6d5da"/><path d="M189.95 221.40L194.00 221.40" stroke="#a6d5da" stroke-width="2.10" fill="none"/><path d="M193.30 218.30L197.30 221.40L193.30 224.50Z" fill="#a6d5da"/>
<path d="M188.43 251.43L188.43 254.82L185.85 257.44" stroke="#0e7f89" stroke-width="1.62" fill="none"/><path d="M185.78 251.97L188.43 248.89L191.09 251.97Z" fill="#0e7f89"/><path d="M184.47 254.36L184.47 259.05L189.16 259.05Z" fill="#0e7f89"/>
<path d="M193.44 256.32L193.44 259.75L190.83 262.40" stroke="#0e7f89" stroke-width="1.64" fill="none"/><path d="M190.75 256.87L193.44 253.75L196.13 256.87Z" fill="#0e7f89"/><path d="M189.42 259.28L189.42 264.04L194.18 264.04Z" fill="#0e7f89"/><path d="M193.44 259.75L196.60 259.75" stroke="#0e7f89" stroke-width="1.64" fill="none"/><path d="M196.05 257.33L199.17 259.75L196.05 262.17Z" fill="#0e7f89"/>
<path d="M184.3 285.2H198.7V286.8L193 292.6V298.9H190V292.6L184.3 286.8Z" fill="#0e7f89"/>
</svg>
<svg class="r" style="left:308px;top:253px" width="20" height="24" viewBox="0 0 20 24"><path d="M8.4 12.5V4.4Q8.4 2.9 9.6 2.9Q10.8 2.9 10.8 4.4V10.2Q11 9.2 12.2 9.4Q13.2 9.6 13.2 10.6Q13.5 9.9 14.5 10.1Q15.5 10.3 15.5 11.4Q15.9 10.8 16.8 11.1Q17.6 11.5 17.6 12.6V16.8Q17.6 19.8 15.3 21.4H10.5Q8.5 19.5 6.5 17.3L3 13.6Q2.4 12.6 3.4 12.1Q4.4 11.7 5.4 12.8L8.4 15.3Z" fill="#fff" stroke="#454a4f" stroke-width="1.1" stroke-linejoin="round"/><path d="M10.8 10.6V14.5M13.2 11V14.5M15.5 11.6V14.5" stroke="#454a4f" stroke-width="0.8"/></svg>
<div class="badge" style="left:821.00px;top:41.50px">1</div>
<div class="badge" style="left:72.40px;top:79.10px">2</div>
<div class="badge" style="left:102.90px;top:197.50px">3</div>
<div class="badge" style="left:328.10px;top:229.10px">4</div>
</body></html>
